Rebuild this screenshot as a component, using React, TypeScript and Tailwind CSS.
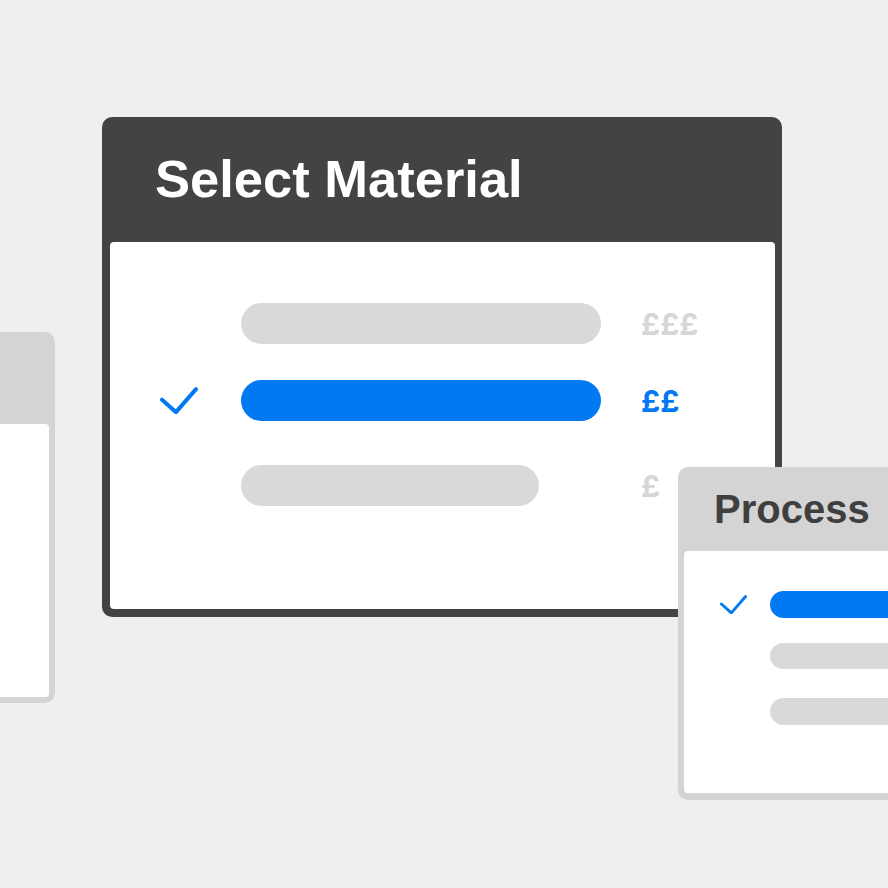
const font = { fontFamily: '"Liberation Sans", Arial, sans-serif' };

function Check({ size, stroke }: { size: number; stroke: number }) {
  return (
    <svg width={size} height={size * 0.72} viewBox="0 0 38 27" fill="none">
      <path
        d="M2 12.5 L16 25 L36 2"
        stroke="#0079f2"
        strokeWidth={stroke}
        strokeLinecap="round"
        strokeLinejoin="round"
      />
    </svg>
  );
}

function MaterialRow({
  mt,
  selected,
  barWidth,
  price,
}: {
  mt: string;
  selected?: boolean;
  barWidth: string;
  price: string;
}) {
  return (
    <div className={`flex h-[41px] items-center pl-[50px] ${mt}`}>
      <div className="flex w-[38px] items-center">{selected && <Check size={38} stroke={4} />}</div>
      <div className="ml-[43px] w-[360px]">
        <div className={`h-[41px] rounded-full ${barWidth} ${selected ? "bg-[#0079f2]" : "bg-[#d9d9d9]"}`} />
      </div>
      <div
        className={`ml-[40px] font-['Inter',sans-serif] text-[30px] font-bold leading-none ${selected ? "text-[#0079f2]" : "text-[#d6d6d6]"}`}
      >
        {price}
      </div>
    </div>
  );
}

function ProcessRow({ mt, selected, h }: { mt: string; selected?: boolean; h: string }) {
  return (
    <div className={`flex items-center pl-[36px] ${mt} ${h}`}>
      <div className="flex w-[27px] items-center">{selected && <Check size={27} stroke={4} />}</div>
      <div className={`ml-[23px] w-[200px] rounded-full ${h} ${selected ? "bg-[#0079f2]" : "bg-[#d9d9d9]"}`} />
    </div>
  );
}

export default function App() {
  return (
    <div className="relative h-[888px] w-[888px] overflow-hidden bg-[#efefef]" style={font}>
      {/* left window, mostly off canvas */}
      <div className="absolute left-[-200px] top-[332px] flex h-[371px] w-[255px] flex-col rounded-[10px] bg-[#d4d4d4] pb-[6px] pr-[6px]">
        <div className="h-[92px] shrink-0" />
        <div className="flex-1 rounded-[4px] bg-white" />
      </div>

      {/* Select Material */}
      <div className="absolute left-[102px] top-[117px] flex h-[500px] w-[680px] flex-col rounded-[10px] bg-[#434343] pb-[8px] pl-[8px] pr-[7px]">
        <div className="flex h-[125px] shrink-0 items-center pl-[45px]">
          <h1 className="text-[52.5px] font-bold leading-none text-white">Select Material</h1>
        </div>
        <div className="flex flex-1 flex-col rounded-[4px] bg-white">
          <MaterialRow mt="mt-[61px]" barWidth="w-full" price="£££" />
          <MaterialRow mt="mt-[36px]" barWidth="w-full" price="££" selected />
          <MaterialRow mt="mt-[44px]" barWidth="w-[298px]" price="£" />
        </div>
      </div>

      {/* Process */}
      <div className="absolute left-[678px] top-[467px] flex h-[333px] w-[300px] flex-col rounded-[10px] bg-[#d4d4d4] pb-[7px] pl-[6px]">
        <div className="flex h-[84px] shrink-0 items-center pl-[30px]">
          <h2 className="text-[40px] font-bold leading-none text-[#3f3f3f]">Process</h2>
        </div>
        <div className="flex flex-1 flex-col rounded-l-[4px] bg-white">
          <ProcessRow mt="mt-[40px]" h="h-[27px]" selected />
          <ProcessRow mt="mt-[25px]" h="h-[26px]" />
          <ProcessRow mt="mt-[29px]" h="h-[27px]" />
        </div>
      </div>
    </div>
  );
}
